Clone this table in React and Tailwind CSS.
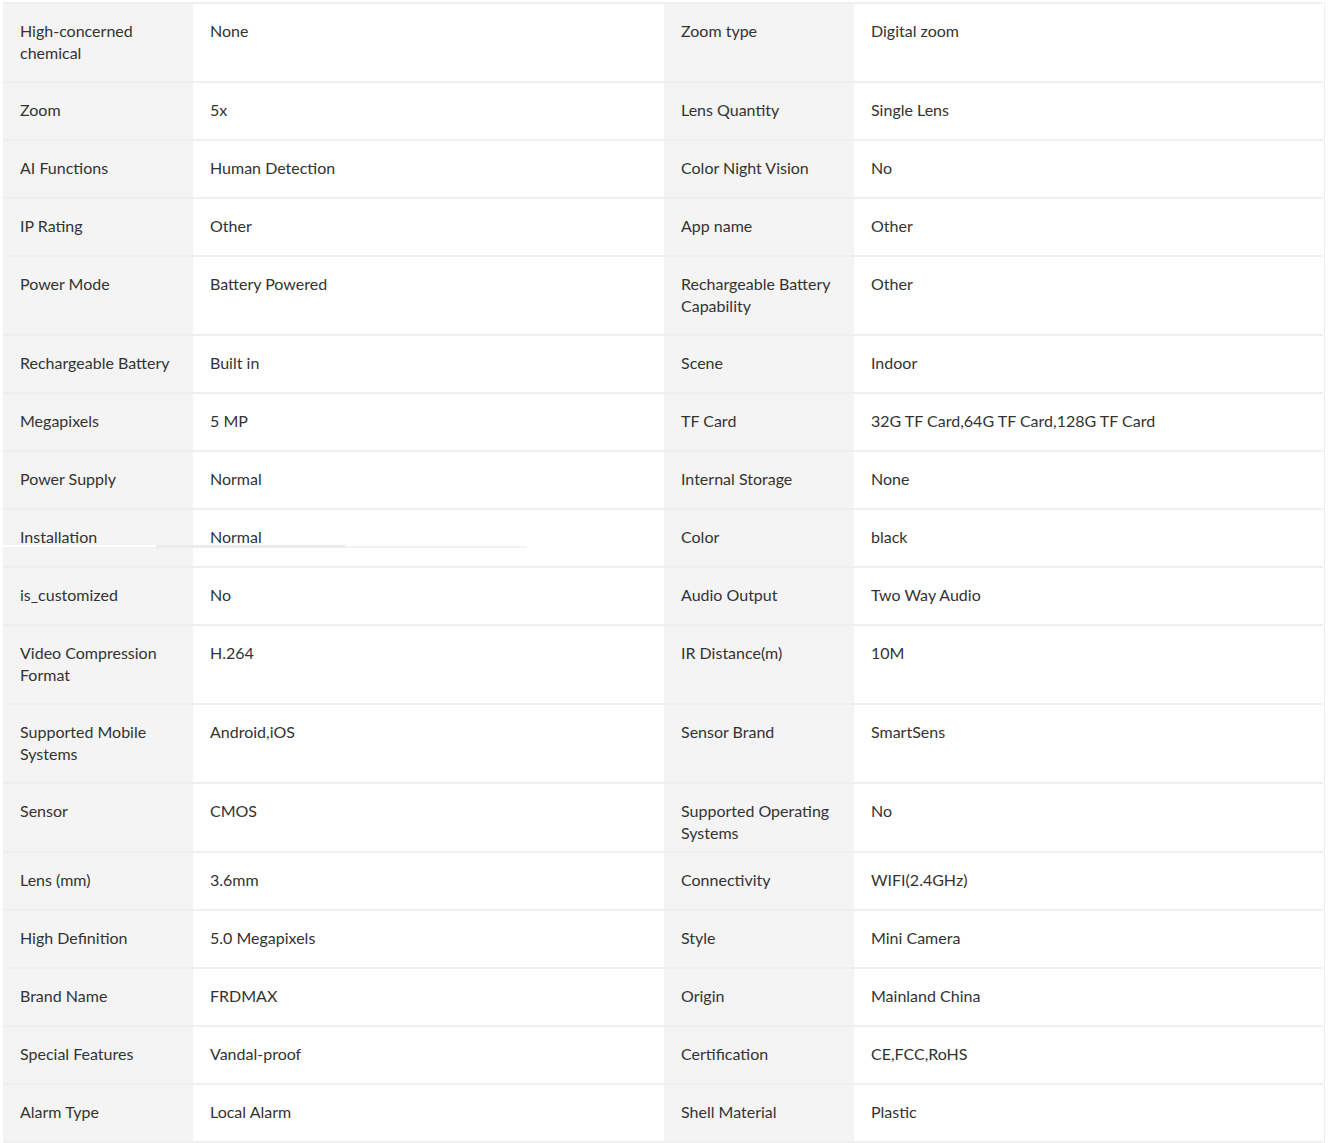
const rows = [
  ["High-concerned chemical", "None", "Zoom type", "Digital zoom", "h-[79px]"],
  ["Zoom", "5x", "Lens Quantity", "Single Lens", "h-[58px]"],
  ["AI Functions", "Human Detection", "Color Night Vision", "No", "h-[58px]"],
  ["IP Rating", "Other", "App name", "Other", "h-[58px]"],
  ["Power Mode", "Battery Powered", "Rechargeable Battery Capability", "Other", "h-[79px]"],
  ["Rechargeable Battery", "Built in", "Scene", "Indoor", "h-[58px]"],
  ["Megapixels", "5 MP", "TF Card", "32G TF Card,64G TF Card,128G TF Card", "h-[58px]"],
  ["Power Supply", "Normal", "Internal Storage", "None", "h-[58px]"],
  ["Installation", "Normal", "Color", "black", "h-[58px]", true],
  ["is_customized", "No", "Audio Output", "Two Way Audio", "h-[58px]"],
  ["Video Compression Format", "H.264", "IR Distance(m)", "10M", "h-[79px]"],
  ["Supported Mobile Systems", "Android,iOS", "Sensor Brand", "SmartSens", "h-[79px]"],
  ["Sensor", "CMOS", "Supported Operating Systems", "No", "h-[69px]"],
  ["Lens (mm)", "3.6mm", "Connectivity", "WIFI(2.4GHz)", "h-[58px]"],
  ["High Definition", "5.0 Megapixels", "Style", "Mini Camera", "h-[58px]"],
  ["Brand Name", "FRDMAX", "Origin", "Mainland China", "h-[58px]"],
  ["Special Features", "Vandal-proof", "Certification", "CE,FCC,RoHS", "h-[58px]"],
  ["Alarm Type", "Local Alarm", "Shell Material", "Plastic", "h-[58px]"],
];

function Cell({ children, label }) {
  return (
    <div
      className={
        "px-[17px] pt-[16px] leading-[22px] " +
        (label ? "bg-[#f4f4f4] pr-[16px]" : "bg-white")
      }
    >
      {children}
    </div>
  );
}

function SpecRow({ row }) {
  const [l1, v1, l2, v2, height, glitch] = row;
  return (
    <div
      className={`relative grid grid-cols-[190px_471px_190px_469px] border-b-2 border-[#efefef] ${height}`}
    >
      <Cell label>{l1}</Cell>
      <Cell>{v1}</Cell>
      <Cell label>{l2}</Cell>
      <Cell>{v2}</Cell>
      {glitch && (
        <>
          <div className="absolute left-[-3px] top-[35px] h-[2px] w-[156px] bg-white" />
          <div className="absolute left-[153px] top-[35px] h-[3px] w-[190px] bg-[#ececec]" />
          <div className="absolute left-[343px] top-[36px] h-[2px] w-[181px] bg-[#f2f2f2]" />
        </>
      )}
    </div>
  );
}

export default function App() {
  return (
    <div className="min-h-[1143px] w-[1328px] bg-white pt-[2px] pl-[3px] flex">
      <div
        className="w-[1320px] border-t-2 border-[#efefef] text-[16px] text-[#333333]"
        style={{ fontFamily: "Lato, 'Open Sans', sans-serif" }}
      >
        {rows.map((row) => (
          <SpecRow key={row[0]} row={row} />
        ))}
      </div>
      <div className="ml-[1px] w-[1px] bg-[#f0f0f0]" />
    </div>
  );
}
